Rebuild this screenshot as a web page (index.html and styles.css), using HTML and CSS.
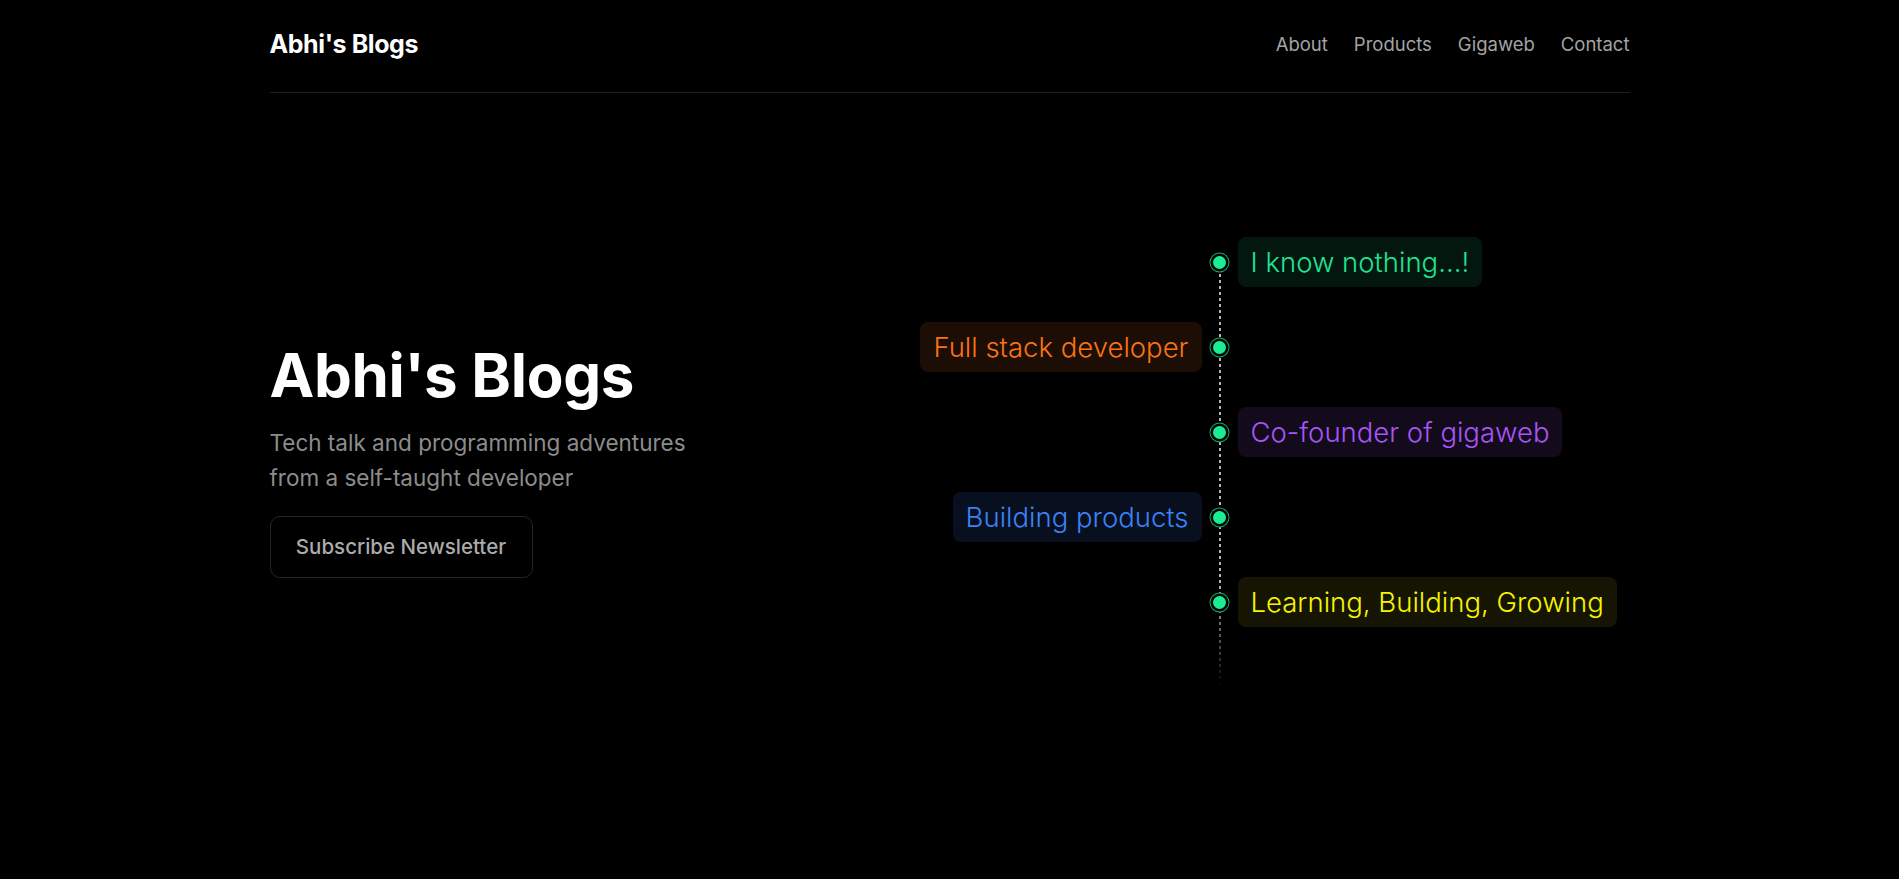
FILE: index.html
```html
<!DOCTYPE html>
<html lang="en">
<head>
<meta charset="utf-8">
<title>Abhi's Blogs</title>
<link rel="stylesheet" href="styles.css">
</head>
<body>
<div class="page">
  <header class="header">
    <a class="logo" href="#">Abhi's Blogs</a>
    <nav class="nav">
      <a href="#">About</a>
      <a href="#">Products</a>
      <a href="#">Gigaweb</a>
      <a href="#">Contact</a>
    </nav>
  </header>
  <main class="hero">
    <section class="intro">
      <h1 class="title">Abhi's Blogs</h1>
      <p class="subtitle">Tech talk and programming adventures<br>from a self-taught developer</p>
      <button class="btn">Subscribe Newsletter</button>
    </section>
    <section class="timeline">
      <div class="cell"></div><div class="dot"></div><div class="cell"><span class="tag green">I know nothing...!</span></div>
      <div class="cell left"><span class="tag orange">Full stack developer</span></div><div class="dot"></div><div class="cell"></div>
      <div class="cell"></div><div class="dot"></div><div class="cell"><span class="tag purple">Co-founder of gigaweb</span></div>
      <div class="cell left"><span class="tag blue">Building products</span></div><div class="dot"></div><div class="cell"></div>
      <div class="cell"></div><div class="dot"></div><div class="cell"><span class="tag yellow">Learning, Building, Growing</span></div>
    </section>
  </main>
</div>
</body>
</html>
```

FILE: styles.css
```css
* { box-sizing: border-box; }
html, body { margin: 0; padding: 0; background: #000; }
body {
  font-family: "Inter", "Noto Sans", sans-serif;
  color: #fff;
  height: 879px;
  overflow: hidden;
}
a { text-decoration: none; color: inherit; }

.page {
  width: 1360px;
  margin: 0 auto;
}

.header {
  height: 93px;
  display: flex;
  align-items: center;
  justify-content: space-between;
  border-bottom: 1px solid #1f1f1f;
  padding-bottom: 4px;
}
.logo {
  font-size: 25px;
  font-weight: 700;
  letter-spacing: -0.4px;
  color: #fff;
}
.nav {
  display: flex;
  gap: 26px;
}
.nav a {
  font-size: 18.5px;
  font-weight: 400;
  color: #a3a3a3;
}

.hero {
  display: flex;
  justify-content: space-between;
  align-items: center;
  padding-top: 144px;
}

.intro {
  display: flex;
  flex-direction: column;
  align-items: flex-start;
  margin-bottom: 2px;
}
.title {
  margin: 0;
  font-size: 60px;
  line-height: 60px;
  font-weight: 700;
  letter-spacing: -0.3px;
  color: #fff;
}
.subtitle {
  margin: 20px 0 0;
  font-size: 22.5px;
  line-height: 35px;
  color: #8c8c8c;
}
.btn {
  margin-top: 21px;
  height: 62px;
  width: 263px;
  background: #000;
  border: 1px solid #262626;
  border-radius: 10px;
  color: #ababab;
  font-family: inherit;
  font-size: 20.5px;
  font-weight: 500;
}

.timeline {
  position: relative;
  display: grid;
  grid-template-columns: 293px 20px 392px;
  grid-auto-rows: 50px;
  column-gap: 8px;
  row-gap: 35px;
  padding-bottom: 60px;
}
.timeline::before {
  content: "";
  position: absolute;
  left: 310px;
  width: 2px;
  top: 25px;
  bottom: 0;
  background: repeating-linear-gradient(to bottom, #b5b5b5 0 3px, transparent 3px 6px);
  -webkit-mask-image: linear-gradient(to bottom, #000 75%, transparent 100%);
  mask-image: linear-gradient(to bottom, #000 75%, transparent 100%);
}
.cell { display: flex; align-items: center; }
.cell.left { justify-content: flex-end; }
.dot {
  position: relative;
  align-self: center;
  justify-self: center;
  width: 13px;
  height: 13px;
  border-radius: 50%;
  background: #1aee95;
  box-shadow: 0 0 0 2.5px #000, 0 0 0 3.5px #12a86c;
}
.tag {
  display: inline-flex;
  align-items: center;
  height: 50px;
  padding: 0 13px;
  border-radius: 8px;
  font-size: 27.5px;
  font-weight: 350;
}
.green { color: #1fe493; background: #03170f; }
.orange { color: #f97316; background: #1c0e04; }
.purple { color: #a855f7; background: #130b1c; }
.blue { color: #3b82f6; background: #081020; }
.yellow { color: #f5f500; background: #161503; }
```
